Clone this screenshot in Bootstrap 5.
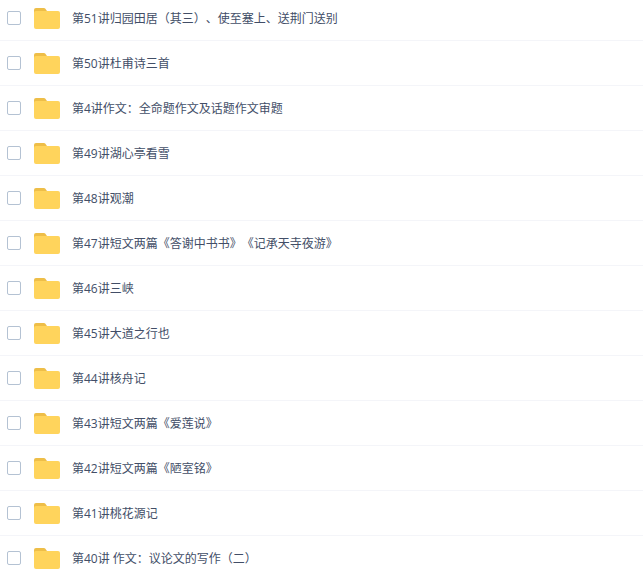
<!DOCTYPE html>
<html lang="zh-CN">
<head>
  <meta charset="UTF-8">
  <meta name="viewport" content="width=device-width, initial-scale=1.0">
  <title>文件列表</title>
  <link href="https://cdn.jsdelivr.net/npm/bootstrap@5.3.0/dist/css/bootstrap.min.css" rel="stylesheet">
  <style>
    html, body {
      height: 578px;
      overflow: hidden;
      background-color: #fff;
    }
    .file-list {
      margin-top: -4px;
    }
    .file-row {
      height: 45px;
      border-bottom: 1px solid #f4f5f9;
      padding-left: 7px;
    }
    .file-check {
      width: 14px;
      height: 14px;
      border: 1px solid #b4c2d3;
      border-radius: 2px;
      margin-right: 13px;
      flex-shrink: 0;
    }
    .file-icon {
      width: 26px;
      height: 21px;
      margin-top: 1px;
      margin-right: 12px;
      flex-shrink: 0;
    }
    .file-name {
      font-family: "Open Sans", "Noto Sans CJK SC", sans-serif;
      font-size: 12px;
      color: #424e67;
      white-space: nowrap;
      padding-top: 2px;
      text-spacing-trim: space-all;
      font-feature-settings: "chws" 0, "halt" 0, "palt" 0;
    }
  </style>
</head>
<body>

<div class="file-list" id="fileList"></div>

<script>
  const files = [
    '第51讲归园田居（其三）、使至塞上、送荆门送别',
    '第50讲杜甫诗三首',
    '第4讲作文：全命题作文及话题作文审题',
    '第49讲湖心亭看雪',
    '第48讲观潮',
    '第47讲短文两篇《答谢中书书》《记承天寺夜游》',
    '第46讲三峡',
    '第45讲大道之行也',
    '第44讲核舟记',
    '第43讲短文两篇《爱莲说》',
    '第42讲短文两篇《陋室铭》',
    '第41讲桃花源记',
    '第40讲 作文：议论文的写作（二）'
  ];

  const folderIcon = `
    <svg class="file-icon" viewBox="0 0 26 21">
      <path d="M0 2a2 2 0 0 1 2-2h8a2 2 0 0 1 1.2.5L13 3v2H0z" fill="#eebe48"/>
      <rect x="0" y="3" width="26" height="18" rx="2" fill="#ffd45c"/>
    </svg>`;

  document.getElementById('fileList').innerHTML = files.map(name => `
    <div class="file-row d-flex align-items-center">
      <span class="file-check"></span>
      ${folderIcon}
      <span class="file-name">${name}</span>
    </div>`).join('');
</script>

<script src="https://cdn.jsdelivr.net/npm/bootstrap@5.3.0/dist/js/bootstrap.bundle.min.js"></script>

</body>
</html>
